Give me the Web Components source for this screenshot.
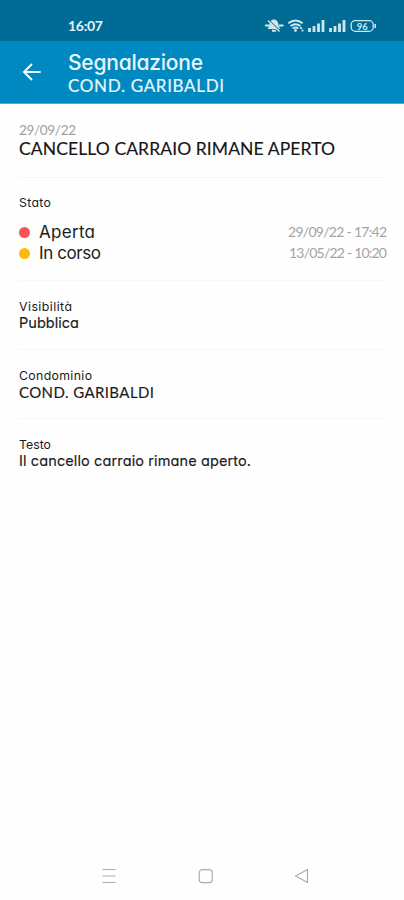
<!DOCTYPE html>
<html lang="it"><head><meta charset="utf-8"><title>Segnalazione</title>
<style>html,body{margin:0;height:100%;background:#fefefe}</style></head>
<body><report-screen></report-screen>
<script>
const define = (name, html, ready) => customElements.define(name, class extends HTMLElement {
  connectedCallback() {
    if (this.shadowRoot) return;
    const t = document.createElement('template');
    t.innerHTML = html;
    this.attachShadow({mode: 'open'}).append(t.content.cloneNode(true));
    if (ready) ready(this, this.shadowRoot);
  }
});

/* A single line of text, tracked so that it spans the width given in "span". */
define('text-line', `<style>
:host{display:block;white-space:nowrap;font-family:Inter,"Liberation Sans",sans-serif;font-feature-settings:"cv11","ss03";line-height:var(--line,18px)}
:host([face=wide]){font-family:Lato,"Liberation Sans",sans-serif;font-feature-settings:normal}
span{display:block;width:max-content}
</style><span></span>`, (el, root) => {
  const s = root.querySelector('span');
  s.textContent = el.textContent;
  s.style.fontSize = el.getAttribute('size') + 'px';
  const want = +el.getAttribute('span');
  s.style.letterSpacing = '0px';
  const gap = (want - s.getBoundingClientRect().width) / (s.textContent.length - 1);
  s.style.letterSpacing = gap + 'px';
  s.style.marginRight = -gap + 'px';
});

define('status-bar', `<style>
:host{display:flex;height:41px;box-sizing:border-box;padding:11px 27px 0 68px;background:#006b94;color:#e4f3f7;justify-content:space-between}
text-line{--line:30px;font-weight:700}
svg{display:block;width:114px;height:30px}
</style><text-line face="wide" size="14" span="35">16:07</text-line>
<svg viewBox="263 11 114 30" fill="none" stroke="#cfe7ec" stroke-width="1.3">
<path d="M267.500 29 C270 27 268.500 19.500 274 19.500 S277.500 27 280.500 29Z" fill="#cfe7ec" stroke="none"/>
<path d="M272 30.800h4M265 25.500h4M279 25.500h4.500" stroke-width="2"/>
<path d="M269 20.500L280.500 31.500" stroke="#006b94" stroke-width="1.500"/><path d="M268 20.500L279.500 31.500" stroke-width="1.400"/>
<path d="M288.300 23.300q7.200-5.600 14.400 0M290.500 26q5-3.700 10 0M292.700 28.500q2.800-2 5.600 0" stroke-width="2"/>
<circle cx="295.500" cy="30.500" r="1.400" fill="#cfe7ec" stroke="none"/>
<path d="M301 27v2M302.500 29.500v2" stroke-width="1.800"/>
<path d="M309.500 32v-4M314 32v-6M318.500 32v-8.500M323 32V20M330.500 32v-4M335 32v-6M339.500 32v-8.500M344 32V20" stroke-width="2.800"/>
<rect x="351.200" y="20.700" width="22" height="10.600" rx="4"/><path d="M375.200 24v4" stroke-width="1.600"/>
<text x="362.300" y="29.600" text-anchor="middle" font-family="Lato,sans-serif" font-weight="700" font-size="9.500" fill="#cfe7ec" stroke="none">96</text>
</svg>`);

define('app-bar', `<style>
:host{display:flex;height:63px;box-sizing:border-box;padding-left:22px;background:#0089c1;color:#e9f6fb;border-bottom:1px solid #4aabd2}
svg{width:20px;height:20px;margin-top:21px}
.t{margin-left:26px;padding-top:8px}
.t text-line{--line:27px;font-weight:500}
.t text-line+text-line{--line:20px;font-weight:400;-webkit-text-stroke:.2px}
</style><svg viewBox="0 0 20 20" fill="none" stroke="#edf8fc" stroke-width="2"><path d="M18.700 10H2M10 2L2 10l8 8"/></svg>
<div class="t"><text-line size="21" span="135">Segnalazione</text-line><text-line face="wide" size="17" span="156">COND. GARIBALDI</text-line></div>`);

define('info-section', `<style>
:host{display:block;padding:18px 0 17px;margin:0 2px 0 0;border-bottom:1px solid #f6f6f6}
:host([last]){border:0}
:host([first]){padding:18px 0 17px}
:host([list]){padding:17px 0 16px}
</style><slot></slot>`);

define('status-row', `<style>
:host{display:flex;align-items:flex-start;height:21px;margin-right:-2px}
i{width:11px;height:11px;border-radius:50%;background:var(--dot);margin:5px 9px 0 0}
.d{margin-left:auto;color:#a4a4a4}
</style><i></i><slot></slot><div class="d"><slot name="date"></slot></div>`);

define('nav-bar', `<style>
:host{display:flex;justify-content:space-between;padding:0 94px 0 101px;height:48px;align-items:center}
svg{width:16px;height:16px;fill:none;stroke:#adadad;stroke-width:1.200}
</style><svg viewBox="0 0 16 16"><path d="M1.500 1.500h13M1.500 8h13M1.500 14.500h13"/></svg>
<svg viewBox="0 0 16 16"><rect x="1.200" y="1.700" width="13" height="13" rx="3"/></svg>
<svg viewBox="0 0 16 16"><path d="M13.500 1.500v13L1.500 8Z" stroke-linejoin="round"/></svg>`);

define('report-screen', `<style>
:host{display:flex;flex-direction:column;height:900px;width:404px;background:#fefefe;color:#1b1b1b;overflow:hidden}
main{flex:1;padding:0 17px 0 19px}
.muted{--line:16px;color:#a0a0a0}
.title{--line:22px;color:#161616;-webkit-text-stroke:.15px}
.label{--line:15px}
.value{--line:18px;-webkit-text-stroke:.15px}
.gap{margin-bottom:12px}
.state{--line:21px}
.date{--line:20px}
</style>
<status-bar></status-bar><app-bar></app-bar>
<main>
<info-section first><text-line class="muted" face="wide" size="13.500" span="57">29/09/22</text-line><text-line class="title" face="wide" size="17.500" span="316">CANCELLO CARRAIO RIMANE APERTO</text-line></info-section>
<info-section list><text-line class="label gap" size="12.300" span="32">Stato</text-line>
<status-row style="--dot:#fa5257"><text-line class="state" size="17" span="56">Aperta</text-line><text-line slot="date" class="date" face="wide" size="14" span="99">29/09/22 - 17:42</text-line></status-row>
<status-row style="--dot:#fabc0c"><text-line class="state" size="17" span="62">In corso</text-line><text-line slot="date" class="date" face="wide" size="14" span="98">13/05/22 - 10:20</text-line></status-row></info-section>
<info-section><text-line class="label" size="12.300" span="53">Visibilità</text-line><text-line class="value" size="14.500" span="60">Pubblica</text-line></info-section>
<info-section><text-line class="label" size="12.300" span="73">Condominio</text-line><text-line class="value" face="wide" size="15" span="135">COND. GARIBALDI</text-line></info-section>
<info-section last><text-line class="label" size="12.300" span="32">Testo</text-line><text-line class="value" size="14.500" span="232">Il cancello carraio rimane aperto.</text-line></info-section>
</main>
<nav-bar></nav-bar>`);
</script></body></html>
